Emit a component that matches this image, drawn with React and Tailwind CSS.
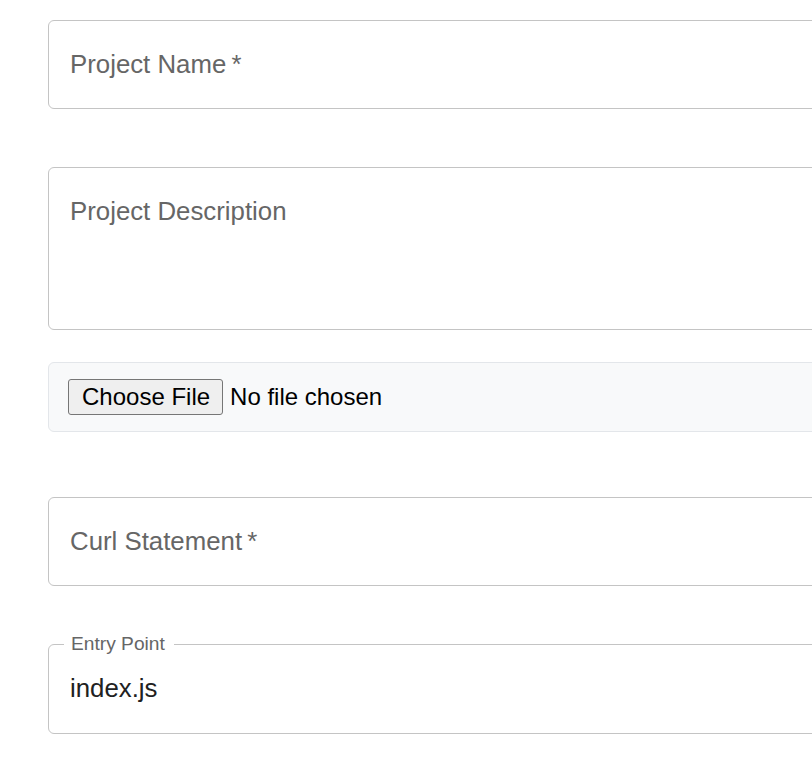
import React from "react";

function Field({ label, required, height }) {
  return (
    <div
      className={`w-[800px] rounded-[6px] border border-[#c4c4c4] bg-white pl-[21px] pt-[28px] ${height}`}
    >
      <div className="text-[25.8px] leading-[30px] text-[#666666]">
        {label}
        {required && <span>{"\u2009*"}</span>}
      </div>
    </div>
  );
}

export default function App() {
  return (
    <div
      className="min-h-[763px] w-[812px] overflow-hidden bg-white pl-[48px] pt-[20px]"
      style={{ fontFamily: '"Liberation Sans", Arial, Helvetica, sans-serif' }}
    >
      <Field label="Project Name" required height="h-[89px]" />
      <div className="mt-[58px]">
        <div className="h-[163px] w-[800px] rounded-[6px] border border-[#c4c4c4] bg-white pl-[21px] pt-[28px]">
          <div className="text-[25.8px] leading-[30px] text-[#666666]">Project Description</div>
        </div>
      </div>
      <div className="mt-[32px] flex h-[70px] w-[800px] items-center rounded-[6px] border border-[#e3e6ea] bg-[#f8f9fa] pl-[19px]">
        <div className="flex h-[36px] items-center rounded-[3px] border border-[#767676] bg-[#efefef] pl-[13px] pr-[12px] text-[24px] leading-[28px] text-black">
          Choose File
        </div>
        <span className="ml-[7px] text-[24px] leading-[28px] text-black">No file chosen</span>
      </div>
      <div className="mt-[65px]">
        <Field label="Curl Statement" required height="h-[89px]" />
      </div>
      <div className="relative mt-[58px] h-[90px] w-[800px] rounded-[6px] border border-[#c4c4c4] bg-white pl-[21px] pt-[28px]">
        <span className="absolute left-[15px] top-[-11px] bg-white pl-[7px] pr-[9px] text-[19.2px] leading-[20px] text-[#666666]">
          Entry Point
        </span>
        <div className="text-[25.8px] leading-[30px] text-[#212121]">index.js</div>
      </div>
    </div>
  );
}
